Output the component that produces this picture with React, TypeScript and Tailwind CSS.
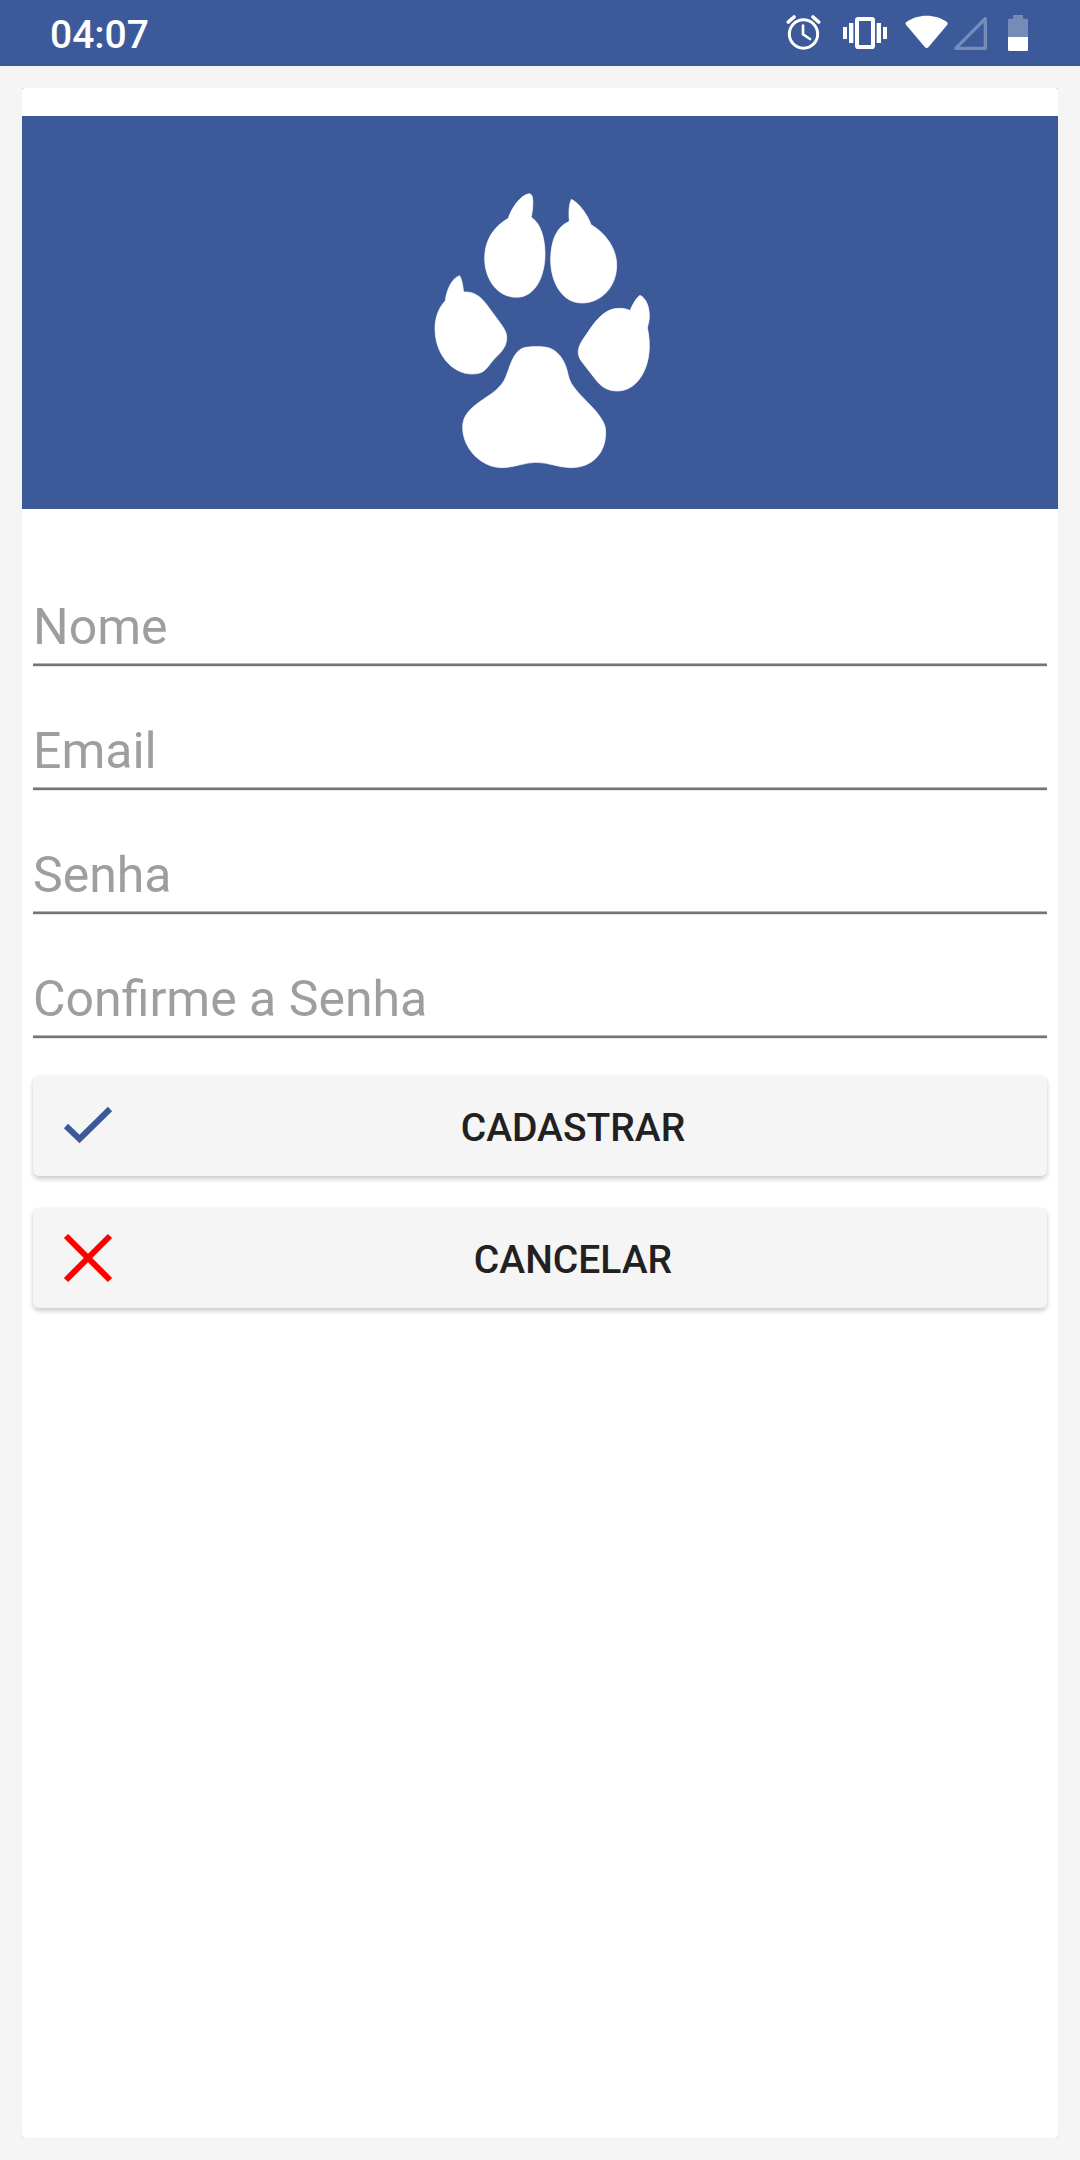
import React from "react";

const fields = [
  { id: "nome", label: "Nome", type: "text" },
  { id: "email", label: "Email", type: "email" },
  { id: "senha", label: "Senha", type: "password" },
  { id: "confirme", label: "Confirme a Senha", type: "password" },
];

function StatusBar() {
  return (
    <header className="flex h-[66px] items-center justify-between bg-[#3c5a99] pr-[52px] pl-[50px] text-white">
      <span className="pt-[3px] text-[39px] leading-[46px] font-medium">04:07</span>
      <div className="flex items-center">
        {/* alarm */}
        <svg className="mr-[22px] h-9 w-[35px]" viewBox="78 45 105 108" fill="none" stroke="currentColor" aria-hidden="true">
          <circle cx="130.500" cy="102" r="42.500" strokeWidth="9" />
          <path d="M129 77V103L150 117" strokeWidth="8" strokeLinecap="round" />
          <path d="M85 66L102 51M159 51L176 66" strokeWidth="11" strokeLinecap="round" />
        </svg>
        {/* vibrate */}
        <svg className="mr-[18px] h-9 w-11" viewBox="249 45 132 108" fill="currentColor" aria-hidden="true">
          <path d="M249 81h12v36h-12zM267 69h13v60h-13zM350 69h13v60h-13zM369 81h12v36h-12z" />
          <rect x="291" y="57" width="48" height="84" rx="4" fill="none" stroke="currentColor" strokeWidth="12" />
        </svg>
        {/* wifi */}
        <svg className="mr-1.5 h-9 w-[43px]" viewBox="435 45 129 108" fill="currentColor" aria-hidden="true">
          <path d="M438 67C456 53 478 47 500 47S544 53 562 67Q564 70 562 74L505 142Q500 147 495 142L438 74Q435 70 438 67Z" />
        </svg>
        {/* mobile signal */}
        <svg className="mr-[21px] h-9 w-[33px] opacity-30" viewBox="582 45 99 108" fill="none" stroke="currentColor" strokeWidth="10" strokeLinejoin="round" aria-hidden="true">
          <path d="M676 56V145H587Z" />
        </svg>
        {/* battery */}
        <svg className="h-9 w-5" viewBox="744 45 60 108" fill="currentColor" aria-hidden="true">
          <path d="M744 111V60Q744 56 748 56H759V45H789V56H800Q804 56 804 60V111Z" opacity="0.3" />
          <path d="M744 111H804V149Q804 153 800 153H748Q744 153 744 149Z" />
        </svg>
      </div>
    </header>
  );
}

function Paw() {
  return (
    <svg className="h-[300px] w-[240px]" viewBox="0 0 720 900" fill="#fff" stroke="#fff" strokeWidth="2" strokeLinejoin="round" role="img" aria-label="Pata">
      <path d="M326 41Q334 40 337 50C341 70 337 92 334 112C362 130 375 175 375 222C375 290 345 352 290 352C232 352 194 298 194 234C194 178 224 138 265 115C273 88 298 48 326 41Z" />
      <path d="M454 58C476 68 503 104 513 134C558 160 590 206 590 256C590 318 546 369 486 369C426 369 392 306 392 240C392 182 410 140 448 124C446 100 446 76 454 58Z" />
      <path d="M119 287C127 300 128 318 131 336C160 334 180 348 198 371L240 428C256 450 261 460 260 478C258 504 240 520 222 538C200 562 196 582 158 582C94 582 45 520 45 446C45 412 57 382 76 362C80 328 96 294 119 287Z" />
      <path d="M660 346C680 356 688 382 688 410C688 424 684 432 682 444C686 460 688 478 688 498C688 570 650 633 592 633C562 633 544 620 528 600L490 551C478 537 474 525 475 512C477 492 492 474 504 456C528 420 556 385 596 385C608 385 620 386 630 392C638 374 648 354 660 346Z" />
      <path d="M318 502C334 499 364 499 380 502C412 508 434 540 442 574C446 594 450 606 462 622C484 652 520 680 540 710C552 728 557 738 557 758C557 820 516 863 452 863C416 863 386 847 348 847C314 847 282 863 246 863C184 863 128 806 128 742C128 708 148 688 178 666C206 646 234 632 252 602C268 574 276 508 318 502Z" />
    </svg>
  );
}

function ActionButton({ type, label, children }: { type: "submit" | "button"; label: string; children: React.ReactNode }) {
  return (
    <button
      type={type}
      className="flex h-[100px] w-full items-center rounded-[6px] bg-[#f5f5f5] px-[22px] text-[#212121] shadow-[0_3px_5px_rgba(0,0,0,0.2),0_0_2px_rgba(0,0,0,0.06)]"
    >
      <svg className="h-[66px] w-[66px] shrink-0" viewBox="0 0 66 66" fill="none" strokeWidth="6" aria-hidden="true">
        {children}
      </svg>
      <span className="flex-1 pt-[3px] text-center text-[39px] leading-[46px] font-medium">{label}</span>
    </button>
  );
}

export default function App() {
  return (
    <div className="flex min-h-screen flex-col bg-[#f5f5f5] font-['Roboto',sans-serif]">
      <StatusBar />
      <main className="m-[22px] flex flex-1 flex-col bg-[#dcdcdc]">
        <div className="flex-1 rounded-[4px] bg-white pt-7">
          <div className="flex justify-center bg-[#3c5a99] pt-16 pb-[29px]">
            <Paw />
          </div>
          <form className="px-[11px] pt-[33px]" onSubmit={(e) => e.preventDefault()}>
            {fields.map((f) => (
              <input
                key={f.id}
                id={f.id}
                type={f.type}
                aria-label={f.label}
                placeholder={f.label}
                className="block h-[124px] w-full border-b-2 border-[#757575] pt-[55px] pb-[7px] text-[50px] leading-[60px] text-[#212121] shadow-[inset_0_-1px_0_#b4b4b4,0_1px_0_#e4e4e4] outline-none placeholder:text-[#9e9e9e]"
              />
            ))}
            <div className="flex flex-col gap-8 pt-[38px]">
              <ActionButton type="submit" label="CADASTRAR">
                <path d="M11 33L24.500 46L55 16" stroke="#3c5a99" />
              </ActionButton>
              <ActionButton type="button" label="CANCELAR">
                <path d="M11 11L55 55M55 11L11 55" stroke="#ff0000" />
              </ActionButton>
            </div>
          </form>
        </div>
      </main>
    </div>
  );
}
